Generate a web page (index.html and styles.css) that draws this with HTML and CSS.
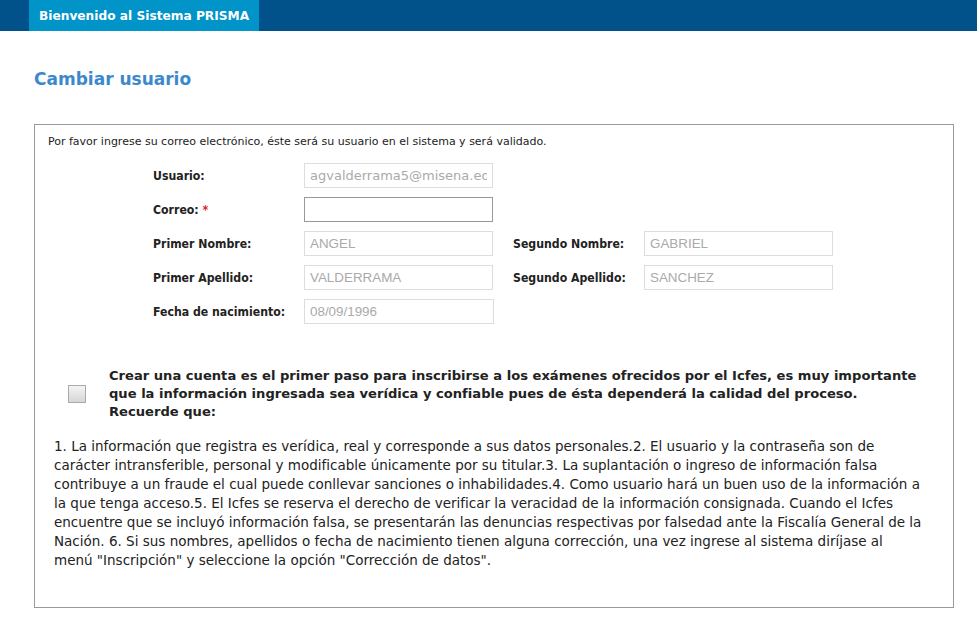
FILE: index.html
```html
<!DOCTYPE html>
<html lang="es">
<head>
<meta charset="utf-8">
<title>Cambiar usuario</title>
<link rel="stylesheet" href="styles.css">
</head>
<body>
<header class="topbar">
  <div class="tab">Bienvenido al Sistema PRISMA</div>
</header>
<main class="page">
  <h2 class="title">Cambiar usuario</h2>
  <section class="box">
    <p class="intro">Por favor ingrese su correo electrónico, éste será su usuario en el sistema y será validado.</p>
    <div class="form">
      <label class="lbl">Usuario:</label>
      <input class="inp inp-mail" type="text" value="agvalderrama5@misena.edu.co" disabled>
      <span></span><span></span>

      <label class="lbl">Correo: <span class="req">*</span></label>
      <input class="inp inp-active" type="text">
      <span></span><span></span>

      <label class="lbl">Primer Nombre:</label>
      <input class="inp" type="text" value="ANGEL" disabled>
      <label class="lbl">Segundo Nombre:</label>
      <input class="inp" type="text" value="GABRIEL" disabled>

      <label class="lbl">Primer Apellido:</label>
      <input class="inp" type="text" value="VALDERRAMA" disabled>
      <label class="lbl">Segundo Apellido:</label>
      <input class="inp" type="text" value="SANCHEZ" disabled>

      <label class="lbl">Fecha de nacimiento:</label>
      <input class="inp" type="text" value="08/09/1996" disabled>
      <span></span><span></span>
    </div>

    <div class="consent">
      <span class="check"></span>
      <p class="consent-text">Crear una cuenta es el primer paso para inscribirse a los exámenes ofrecidos por el Icfes, es muy importante que la información ingresada sea verídica y confiable pues de ésta dependerá la calidad del proceso. Recuerde que:</p>
    </div>

    <p class="terms">1. La información que registra es verídica, real y corresponde a sus datos personales.2. El usuario y la contraseña son de carácter intransferible, personal y modificable únicamente por su titular.3. La suplantación o ingreso de información falsa contribuye a un fraude el cual puede conllevar sanciones o inhabilidades.4. Como usuario hará un buen uso de la información a la que tenga acceso.5. El Icfes se reserva el derecho de verificar la veracidad de la información consignada. Cuando el Icfes encuentre que se incluyó información falsa, se presentarán las denuncias respectivas por falsedad ante la Fiscalía General de la Nación. 6. Si sus nombres, apellidos o fecha de nacimiento tienen alguna corrección, una vez ingrese al sistema diríjase al menú "Inscripción" y seleccione la opción "Corrección de datos".</p>
  </section>
</main>
</body>
</html>
```

FILE: styles.css
```css
* { box-sizing: border-box; }

body {
  margin: 0;
  background: #fff;
  font-family: "DejaVu Sans", Verdana, sans-serif;
  color: #222;
}

.topbar {
  height: 31px;
  background: #01518b;
  padding-left: 29px;
  display: flex;
}

.tab {
  background: #0194c8;
  color: #fff;
  font-weight: bold;
  font-size: 12.2px;
  width: 230px;
  padding-left: 10px;
  display: flex;
  align-items: center;
}

.page {
  padding: 0 23px 0 34px;
}

.title {
  margin: 0;
  padding-top: 38px;
  height: 93px;
  font-size: 17px;
  font-weight: bold;
  color: #3b89cc;
}

.box {
  border: 1px solid #999;
  width: 920px;
  height: 484px;
  padding: 10px 20px 0 13px;
}

.intro {
  margin: 0;
  font-size: 11px;
  line-height: 14px;
}

.form {
  display: grid;
  grid-template-columns: 151px 209px 131px 190px;
  row-gap: 9px;
  margin: 14px 0 0 105px;
  align-items: center;
}

.lbl {
  font-family: "DejaVu Sans Condensed", Tahoma, sans-serif;
  font-weight: bold;
  font-size: 12.2px;
  color: #222;
}

.req { color: #e02020; }

.inp {
  height: 25px;
  width: 189px;
  border: 1px solid #ddd;
  background: #fff;
  padding: 0 5px;
  font-family: "Liberation Sans", Tahoma, sans-serif;
  font-size: 13.4px;
  color: #aaa;
}

.form > .inp:last-of-type { width: 190px; }

.inp-mail {
  font-family: "DejaVu Sans", Verdana, sans-serif;
  font-size: 13px;
}

.inp-active { border: 1px solid #999; }

.consent {
  display: flex;
  align-items: center;
  margin-top: 43px;
  padding-left: 20px;
}

.check {
  flex: none;
  width: 18px;
  height: 18px;
  border: 1px solid #aaa;
  background: linear-gradient(#f4f4f4, #d6d6d6);
  margin-right: 23px;
}

.consent-text {
  margin: 0;
  font-size: 13.1px;
  font-weight: bold;
  line-height: 18px;
  width: 815px;
}

.terms {
  margin: 16px 0 0 6px;
  font-size: 13.5px;
  line-height: 19px;
  width: 870px;
}
```
